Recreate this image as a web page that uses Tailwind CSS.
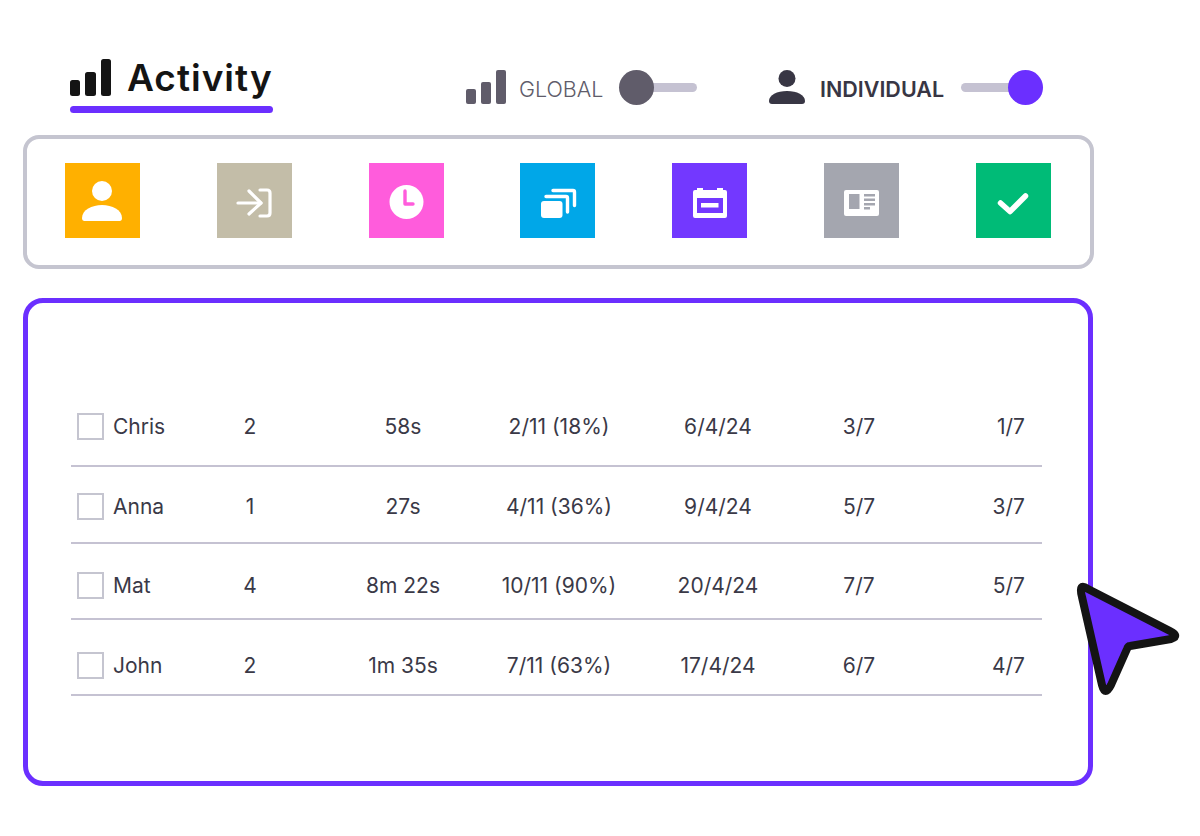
<!DOCTYPE html>
<html lang="en">
<head>
  <meta charset="UTF-8">
  <title>Activity</title>
  <script src="https://cdn.jsdelivr.net/npm/@tailwindcss/browser@4"></script>
</head>
<body class="bg-white font-['Inter',sans-serif] text-[#3a3947]">
  <div class="relative w-[1200px] h-[836px] overflow-hidden pt-[59px]">

    <!-- Header -->
    <div class="flex items-start h-[76px] pl-[70px]">
      <div class="w-[203px]">
        <div class="flex items-center h-[39px] gap-[16px] -mt-[1px]">
          <svg width="41" height="38" viewBox="0 0 41 38" class="shrink-0" fill="#141414">
            <rect x="0" y="21" width="10" height="16" rx="2.5"/>
            <rect x="15" y="13" width="11" height="24" rx="2.5"/>
            <rect x="31" y="0" width="10" height="37" rx="2.5"/>
          </svg>
          <span class="text-[37px] font-semibold leading-none tracking-[1px] whitespace-nowrap text-[#141414]">Activity</span>
        </div>
        <div class="h-[7px] w-[203px] rounded-full bg-[#6b2fff] mt-[9px]"></div>
      </div>

      <!-- Global toggle -->
      <div class="flex items-center h-[36px] ml-[193px] mt-[10px]">
        <svg width="40" height="34" viewBox="0 0 40 34" class="shrink-0" fill="#605c6a">
          <rect x="0" y="19" width="10" height="15" rx="2"/>
          <rect x="15" y="12" width="10" height="22" rx="2"/>
          <rect x="30" y="0" width="10" height="34" rx="2"/>
        </svg>
        <span class="w-[84px] ml-[13px] pt-[6px] text-[21.5px] font-light leading-none whitespace-nowrap text-[#605c6a]">GLOBAL</span>
        <div class="relative w-[77px] h-[9px] ml-[17px] rounded-full bg-[#c5c2d2]">
          <div class="absolute -left-[1px] -top-[13px] w-[35px] h-[35px] rounded-full bg-[#605c6a]"></div>
        </div>
      </div>

      <!-- Individual toggle -->
      <div class="flex items-center h-[36px] ml-[72px] mt-[10px]">
        <svg width="36" height="34" viewBox="0 0 36 34" class="shrink-0" fill="#383644">
          <circle cx="18" cy="8.5" r="8.5"/>
          <path d="M0 31C0 25 8 21 18 21C28 21 36 25 36 31Q36 34 33 34H3Q0 34 0 31Z"/>
        </svg>
        <span class="w-[123px] ml-[15px] pt-[6px] text-[21.5px] font-semibold leading-none whitespace-nowrap text-[#383644]">INDIVIDUAL</span>
        <div class="relative w-[82px] h-[9px] ml-[18px] rounded-full bg-[#c5c2d2]">
          <div class="absolute right-0 -top-[13px] w-[35px] h-[35px] rounded-full bg-[#6b2fff]"></div>
        </div>
      </div>
    </div>

    <!-- Activity type icons -->
    <div class="flex items-start justify-between w-[1071px] h-[134px] ml-[23px] pt-[24px] pl-[38px] pr-[39px] border-4 border-[#c5c5d0] rounded-[16px]">
      <div class="w-[75px] h-[75px] bg-[#ffb000]">
        <svg width="75" height="75" viewBox="0 0 75 75" fill="#fff">
          <circle cx="37" cy="28" r="10"/>
          <path d="M17 55C17 47 27 42 37 42C47 42 57 47 57 55Q57 58 54.5 58H19.5Q17 58 17 55Z"/>
        </svg>
      </div>
      <div class="w-[75px] h-[75px] bg-[#c3bda8]">
        <svg width="75" height="75" viewBox="0 0 75 75" fill="none" stroke="#fff" stroke-width="3.2" stroke-linecap="round" stroke-linejoin="round">
          <path d="M21 40H44"/>
          <path d="M32 28L44 40L32 51"/>
          <path d="M43 27H50Q53 27 53 30V50Q53 53 50 53H43"/>
        </svg>
      </div>
      <div class="w-[75px] h-[75px] bg-[#ff5cdc]">
        <svg width="75" height="75" viewBox="0 0 75 75">
          <circle cx="37.5" cy="39" r="17" fill="#fff"/>
          <path d="M36 28V41H44" fill="none" stroke="#ff5cdc" stroke-width="3.4" stroke-linecap="round" stroke-linejoin="round"/>
        </svg>
      </div>
      <div class="w-[75px] h-[75px] bg-[#00a7e8]">
        <svg width="75" height="75" viewBox="0 0 75 75" fill="none" stroke="#fff" stroke-width="3.4" stroke-linecap="round" stroke-linejoin="round">
          <rect x="21" y="38" width="21.5" height="17" rx="3" fill="#fff" stroke="none"/>
          <path d="M26 33.5H46Q47.5 33.5 47.5 35V49"/>
          <path d="M33 27.5H53Q54.5 27.5 54.5 29V42.5"/>
        </svg>
      </div>
      <div class="w-[75px] h-[75px] bg-[#7338ff]">
        <svg width="75" height="75" viewBox="0 0 75 75" fill="#fff">
          <path fill-rule="evenodd" d="M25 25H31V27H45V25H51V27H53Q55 27 55 29V53Q55 55 53 55H23Q21 55 21 53V29Q21 27 23 27H25ZM25 35V50H51V35Z"/>
          <rect x="29" y="40" width="17.5" height="4.5"/>
        </svg>
      </div>
      <div class="w-[75px] h-[75px] bg-[#a4a6af]">
        <svg width="75" height="75" viewBox="0 0 75 75" fill="#a4a6af">
          <rect x="20" y="27" width="35" height="26" rx="2" fill="#fff"/>
          <rect x="25" y="31" width="10.5" height="15"/>
          <rect x="40" y="31" width="11" height="2.5"/>
          <rect x="40" y="35.5" width="11" height="2.5"/>
          <rect x="40" y="40" width="11" height="2.5"/>
          <rect x="40" y="44" width="6" height="2.5"/>
        </svg>
      </div>
      <div class="w-[75px] h-[75px] bg-[#00bb77]">
        <svg width="75" height="75" viewBox="0 0 75 75" fill="none" stroke="#fff" stroke-width="5.5" stroke-linecap="round" stroke-linejoin="round">
          <path d="M24.5 40L34 48.5L49.5 33"/>
        </svg>
      </div>
    </div>

    <!-- Learner table -->
    <div class="w-[1070px] h-[488px] ml-[23px] mt-[29px] pt-[91px] pl-[43px] border-[5px] border-[#6b2fff] rounded-[20px] text-[21px] leading-[24px]">
      <div class="grid grid-cols-[110px_138px_168px_144px_174px_108px_129px] items-start w-[971px] h-[73px] pt-[21px] border-b-2 border-[#c5c2d2] text-center">
        <div class="flex items-center h-[24px] pl-[6px] text-left"><span class="w-[27px] h-[27px] -mt-[2px] mr-[9px] border-2 border-[#c5c5d0]"></span>Chris</div>
        <div>2</div>
        <div>58s</div>
        <div>2/11 (18%)</div>
        <div>6/4/24</div>
        <div>3/7</div>
        <div class="text-right pr-[17px]">1/7</div>
      </div>
      <div class="grid grid-cols-[110px_138px_168px_144px_174px_108px_129px] items-start w-[971px] h-[77px] pt-[28px] border-b-2 border-[#c5c2d2] text-center">
        <div class="flex items-center h-[24px] pl-[6px] text-left"><span class="w-[27px] h-[27px] -mt-[2px] mr-[9px] border-2 border-[#c5c5d0]"></span>Anna</div>
        <div>1</div>
        <div>27s</div>
        <div>4/11 (36%)</div>
        <div>9/4/24</div>
        <div>5/7</div>
        <div class="text-right pr-[17px]">3/7</div>
      </div>
      <div class="grid grid-cols-[110px_138px_168px_144px_174px_108px_129px] items-start w-[971px] h-[76px] pt-[30px] border-b-2 border-[#c5c2d2] text-center">
        <div class="flex items-center h-[24px] pl-[6px] text-left"><span class="w-[27px] h-[27px] -mt-[2px] mr-[9px] border-2 border-[#c5c5d0]"></span>Mat</div>
        <div>4</div>
        <div>8m 22s</div>
        <div>10/11 (90%)</div>
        <div>20/4/24</div>
        <div>7/7</div>
        <div class="text-right pr-[17px]">5/7</div>
      </div>
      <div class="grid grid-cols-[110px_138px_168px_144px_174px_108px_129px] items-start w-[971px] h-[76px] pt-[34px] border-b-2 border-[#c5c2d2] text-center">
        <div class="flex items-center h-[24px] pl-[6px] text-left"><span class="w-[27px] h-[27px] -mt-[2px] mr-[9px] border-2 border-[#c5c5d0]"></span>John</div>
        <div>2</div>
        <div>1m 35s</div>
        <div>7/11 (63%)</div>
        <div>17/4/24</div>
        <div>6/7</div>
        <div class="text-right pr-[17px]">4/7</div>
      </div>
    </div>

    <!-- Cursor -->
    <svg class="absolute left-[1070px] top-[575px]" width="115" height="125" viewBox="0 0 115 125">
      <path d="M18 14L100 56Q110 61 101 64L60 71Q58 71 57 74L41 110Q35 122 32 110L12 22Q8 7 18 14Z" fill="#6b2fff" stroke="#141414" stroke-width="8" stroke-linejoin="round"/>
    </svg>
  </div>
</body>
</html>
